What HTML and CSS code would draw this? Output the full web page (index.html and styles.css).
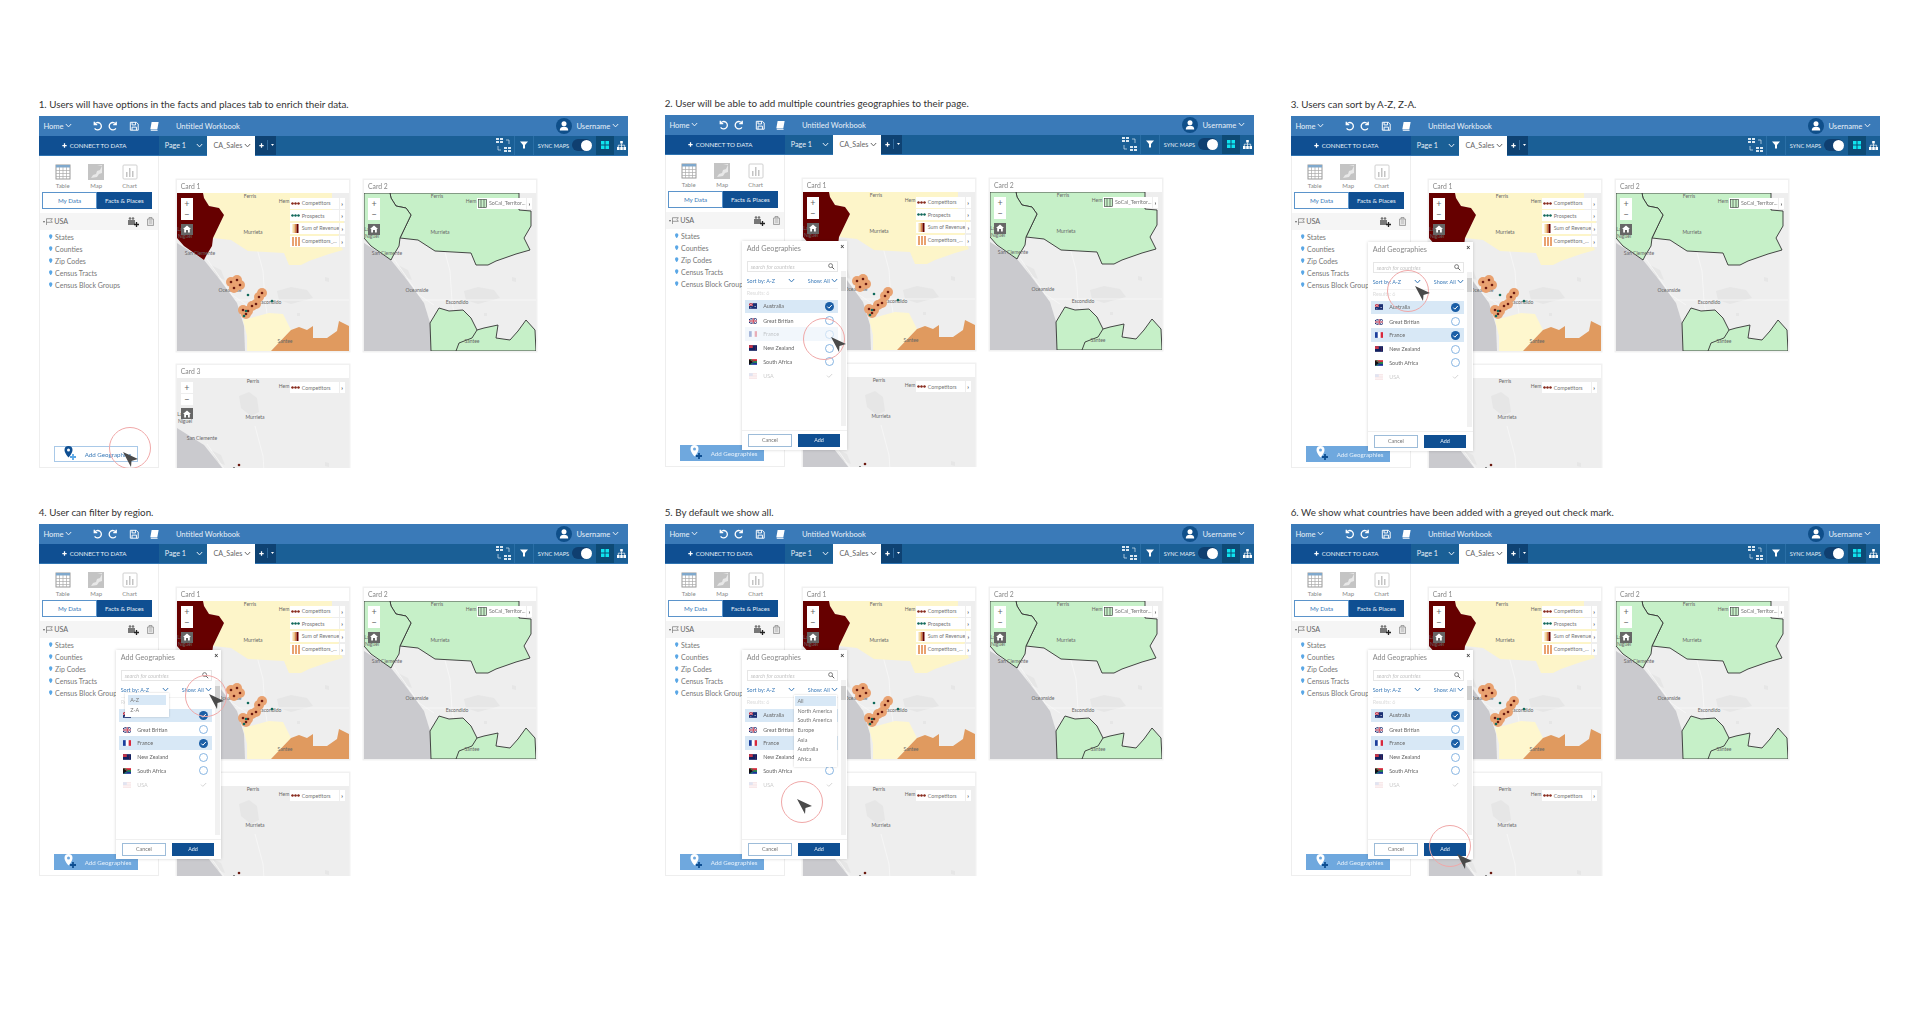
FILE: index.html
```html
<!DOCTYPE html>
<html>

<head>
    <meta charset="UTF-8">
    <title>Add Geographies flow</title>

    <link rel="stylesheet" href="styles.css">

</head>

<body>

    <div id="board"></div>

    <script src="script.js"></script>

</body>

</html>
```

FILE: styles.css
```css
* {
    box-sizing: border-box;
}

body {
    margin: 0;
    background: #fff;
    font-family: Lato, "Open Sans", sans-serif;
    color: #666;
}

svg {
    display: block;
    flex: none;
}

#board {
    display: grid;
    grid-template-columns: repeat(3, 589.5px);
    grid-auto-rows: 372px;
    column-gap: 36.5px;
    row-gap: 36px;
    padding: 96px 0 0 38.7px;
    height: 1020px;
    overflow: hidden;
}

.caption {
    height: 19.5px;
    font-size: 9.8px;
    line-height: 16px;
    color: #333;
    white-space: nowrap;
}

.panel-2 {
    margin-top: -1px;
}

.app {
    position: relative;
    height: 352.5px;
    overflow: hidden;
    filter: blur(0.4px);
}

/* top bars */
.topbar {
    display: flex;
    align-items: center;
    height: 20.5px;
    background: #3a7ab8;
    color: #e6eff7;
    font-size: 7.6px;
}

.home {
    margin-left: 4.7px;
    width: 20px;
}

.topbar .chev {
    margin-left: 2px;
}

.tb-icon {
    width: 10.5px;
    height: 10.5px;
}

.tb-undo {
    margin-left: 19.5px;
}

.tb-redo {
    margin-left: 6px;
}

.tb-save {
    margin-left: 10.5px;
}

.tb-book {
    margin-left: 9px;
}

.workbook {
    margin-left: 16.5px;
}

.user {
    display: flex;
    align-items: center;
    margin-left: auto;
    margin-right: 9px;
}

.avatar {
    width: 16px;
    height: 16px;
    margin-right: 4px;
}

.toolbar {
    display: flex;
    align-items: stretch;
    height: 19.5px;
    background: #1a5f96;
    color: #e6eff7;
    font-size: 6.6px;
    border-bottom: 1px solid #2f74b2;
}

.connect {
    display: flex;
    align-items: center;
    width: 120px;
    padding-left: 23px;
    gap: 3px;
    background: #0f4f92;
    font-size: 6.2px;
}

.tab {
    display: flex;
    align-items: center;
    font-size: 7.2px;
}

.tab-page {
    width: 48.7px;
    padding-left: 6px;
    gap: 10px;
}

.tab-sheet {
    width: 47.3px;
    padding-left: 6px;
    gap: 1.5px;
    background: #fff;
    color: #666;
    margin-bottom: -1px;
}

.tab-add {
    display: flex;
    align-items: center;
    width: 21.6px;
    padding-left: 4px;
    gap: 3px;
    background: #0e4273;
}

.tab-add .sep {
    width: 1px;
    height: 10px;
    background: #2f6a9e;
}

.tools {
    display: flex;
    align-items: center;
    margin-left: auto;
}

.swap {
    width: 15px;
    height: 14px;
}

.tool-sep {
    width: 1px;
    align-self: stretch;
    background: #2a6fa6;
}

.tools .swap + .tool-sep {
    margin-left: 3px;
}

.funnel {
    width: 8px;
    height: 8px;
    margin: 0 5px 0 5px;
}

.sync {
    margin-left: 4px;
    font-size: 5.6px;
    white-space: nowrap;
}

.toggle {
    position: relative;
    width: 20px;
    height: 12px;
    margin-left: 3px;
    margin-right: 4px;
    border-radius: 6px;
    background: #0f3f70;
}

.toggle::after {
    content: "";
    position: absolute;
    right: 0;
    top: 0.5px;
    width: 11px;
    height: 11px;
    border-radius: 50%;
    background: #fff;
}

.grid-btn {
    display: flex;
    align-items: center;
    justify-content: center;
    align-self: stretch;
    width: 17.6px;
    background: #0d4a75;
}

.grid-btn svg {
    width: 8px;
    height: 8px;
}

.org {
    width: 9px;
    height: 9px;
    margin: 0 2.5px 0 3px;
}

/* main area */
.main {
    display: flex;
    height: 312.5px;
}

.sidebar {
    display: flex;
    flex-direction: column;
    width: 120px;
    border: 1px solid #eee;
    border-top: none;
    background: #fff;
}

.views {
    display: flex;
    padding: 8px 0 0 14.5px;
    gap: 16.5px;
}

.view {
    display: flex;
    flex-direction: column;
    align-items: center;
    width: 17px;
    font-size: 6px;
    color: #888;
    gap: 2px;
}

.view svg {
    width: 16px;
    height: 16px;
}

.segment {
    display: flex;
    height: 17px;
    margin: 3px 6px 0 2.5px;
    font-size: 6.2px;
}

.segment span {
    display: flex;
    align-items: center;
    justify-content: center;
}

.seg-left {
    width: 55px;
    border: 1px solid #5b94cb;
    background: #fff;
    color: #3a7ab8;
}

.seg-right {
    width: 55px;
    background: #0f4f92;
    color: #e6eff7;
}

.group {
    display: flex;
    align-items: center;
    height: 17px;
    margin-top: 4.5px;
    padding-left: 3px;
    background: #f5f5f5;
    font-size: 7.2px;
}

.caret {
    width: 0;
    height: 0;
    border: 1.7px solid transparent;
    border-top: 2.2px solid #666;
    border-bottom: none;
}

.flag-line {
    width: 7px;
    height: 7px;
    margin: 0 1px 0 1.5px;
}

.add-layer {
    width: 11px;
    height: 10px;
    margin-left: auto;
}

.trash {
    width: 7px;
    height: 9px;
    margin: 0 4px 0 8px;
}

.layers {
    margin: 0.5px 0 0;
    padding: 0 0 0 9.5px;
    list-style: none;
    font-size: 7px;
    color: #777;
}

.layers li {
    display: flex;
    align-items: center;
    height: 12px;
    gap: 2.5px;
    white-space: nowrap;
}

.pin {
    width: 3.4px;
    height: 5.5px;
}

.add-geo {
    display: flex;
    align-items: center;
    height: 16px;
    margin: auto 0 5px 14px;
    width: 84px;
    padding-left: 9px;
    gap: 8px;
    border: 1px solid #a9c9e8;
    font-size: 6.2px;
    color: #3a7ab8;
    background: #fff;
    white-space: nowrap;
}

.add-geo svg {
    width: 13px;
    height: 14px;
    margin-top: -3px;
}

.add-geo.filled {
    background: #6fa8de;
    border-color: #6fa8de;
    color: #e6f0fa;
}

/* cards */
.canvas {
    display: grid;
    grid-template-columns: 172px 172px;
    grid-template-rows: 171.3px 172px;
    column-gap: 15.3px;
    row-gap: 13.7px;
    padding: 24.5px 0 0 18px;
    overflow: hidden;
    flex: 1;
}

.card {
    position: relative;
    background: #fff;
    box-shadow: 0 0 0 1.5px #f1f1f1;
}

.card-title {
    height: 13.3px;
    padding-left: 4px;
    font-size: 6.8px;
    line-height: 13.3px;
    color: #888;
}

.map {
    width: 172px;
    height: 158px;
}

.map text {
    font-family: Lato, "Open Sans", sans-serif;
    font-size: 5px;
    fill: #666;
}

.map-ctl {
    position: absolute;
    left: 4.5px;
    top: 17.5px;
    width: 11.5px;
}

.map-ctl span {
    display: flex;
    align-items: center;
    justify-content: center;
    height: 11px;
    margin-bottom: 0.5px;
    background: #fff;
    color: #666;
    font-size: 9px;
    line-height: 1;
}

.map-ctl .map-home {
    margin-top: 3.5px;
    background: #666;
}

.map-home svg {
    width: 8px;
    height: 8px;
}

.legend {
    position: absolute;
    left: 113px;
    top: 17.5px;
    width: 55px;
}

.legend-row {
    display: flex;
    align-items: center;
    height: 11px;
    margin-bottom: 1.7px;
    background: #fff;
    font-size: 5.3px;
    color: #777;
    white-space: nowrap;
}

.legend-row svg {
    width: 9px;
    height: 9px;
    margin: 0 2px 0 1px;
}

.legend-row b {
    margin-left: auto;
    width: 6px;
    border-left: 1px solid #eee;
    text-align: center;
    font-size: 6px;
    line-height: 11px;
    color: #333;
}

/* dialog */
.modal {
    position: absolute;
    left: 77px;
    top: 126.5px;
    display: flex;
    flex-direction: column;
    width: 105.5px;
    height: 209px;
    background: #fff;
    box-shadow: 0 0 3px rgba(0, 0, 0, 0.18);
    font-size: 5.4px;
}

.modal-title {
    height: 15.5px;
    padding: 3px 0 0 5px;
    font-size: 7.2px;
    color: #888;
}

.modal-close {
    position: absolute;
    right: 3px;
    top: 2px;
    font-size: 7px;
    font-weight: 700;
    line-height: 1;
    color: #333;
}

.search {
    display: flex;
    align-items: center;
    justify-content: space-between;
    height: 11px;
    margin: 4.5px 9.5px 0 5px;
    padding: 0 2px 0 3px;
    border: 1px solid #e6e6e6;
    font-style: italic;
    color: #c4c4c4;
}

.search svg {
    width: 6.5px;
    height: 6.5px;
}

.sort-row {
    display: flex;
    align-items: center;
    height: 10px;
    margin: 3.5px 9px 0 5px;
    color: #3a7ab8;
    white-space: nowrap;
}

.sort-by {
    width: 44px;
    display: flex;
    gap: 13px;
    align-items: center;
}

.show-by {
    margin-left: auto;
    display: flex;
    gap: 1.5px;
    align-items: center;
}

.results {
    height: 12px;
    margin: 2px 9px 0 5px;
    border-top: 1.5px solid #f3f3f3;
    color: #dcdcdc;
    line-height: 9px;
}

.geo-list {
    margin: 0 9.5px 0 3px;
    padding: 0;
    list-style: none;
}

.geo-row {
    display: flex;
    align-items: center;
    height: 13.8px;
    padding: 0 4px 0 4px;
    gap: 6px;
    color: #666;
}

.geo-row:first-child {
    height: 13px;
    margin-bottom: 1.2px;
}

.geo-row.on {
    background: #d8e8f6;
}

.geo-row.hover {
    background: #f2f7fc;
}

.geo-row.hover > *,
.geo-row.done > * {
    opacity: 0.35;
}

.flag {
    width: 8.5px;
    height: 6px;
}

.tick {
    width: 9px;
    height: 9px;
    margin-left: auto;
}

.scroll {
    position: absolute;
    left: 99px;
    top: 30px;
    width: 5px;
    height: 155px;
    background: #f1f1f1;
}

.scroll::after {
    content: "";
    position: absolute;
    left: 0;
    top: 6px;
    width: 100%;
    height: 14px;
    background: #cfcfcf;
}

.modal-foot {
    display: flex;
    gap: 5.7px;
    height: 20px;
    margin-top: auto;
    padding: 2.5px 7px 3.5px 6px;
    border-top: 1px solid #f0f0f0;
}

.modal-foot span {
    display: flex;
    align-items: center;
    justify-content: center;
    flex: 1;
}

.btn-cancel {
    border: 1px solid #9dbcd9;
    color: #777;
}

.btn-add {
    background: #0f4f92;
    color: #e6eff7;
}

.menu {
    position: absolute;
    background: #fff;
    box-shadow: 0 0 2px rgba(0, 0, 0, 0.2);
    color: #777;
}

.menu div {
    display: flex;
    align-items: center;
    height: 9.7px;
    padding-left: 2px;
}

.menu .sel {
    background: #d8e8f6;
}

.menu-sort {
    left: 9.5px;
    top: 43px;
    width: 43.5px;
    height: 24px;
    padding: 2px 3px;
}

.menu-show {
    left: 52.7px;
    top: 45px;
    width: 42.7px;
    height: 72px;
    padding: 1px;
}

/* walkthrough marker */
.ring {
    position: absolute;
    width: 42px;
    height: 42px;
    margin: -21px 0 0 -21px;
    border: 1px solid #f0a8a8;
    border-radius: 50%;
}

.pointer {
    position: absolute;
    width: 15px;
    height: 15px;
}

.panel-1 .ring { left: 91px; top: 332px; }
.panel-1 .pointer { left: 84.3px; top: 336px; }
.panel-2 .ring { left: 159.3px; top: 224.5px; }
.panel-2 .pointer { left: 166px; top: 222.8px; }
.panel-3 .ring { left: 117.6px; top: 175.5px; }
.panel-3 .pointer { left: 124.5px; top: 170.2px; }
.panel-4 .ring { left: 167.3px; top: 172.5px; }
.panel-4 .pointer { left: 170.4px; top: 170.5px; }
.panel-5 .ring { left: 137.6px; top: 278.8px; }
.panel-5 .pointer { left: 132.4px; top: 275.5px; }
.panel-6 .ring { left: 159.7px; top: 322px; }
.panel-6 .pointer { left: 166.6px; top: 330.8px; }
```

FILE: script.js
```js
// The six steps share one app frame, so it is built from a template.
const chev = (c) => `<svg class="chev" width="7" height="5" viewBox="0 0 7 5"><path d="M.8 1 3.500 3.900 6.200 1" fill="none" stroke="${c}" stroke-width="1"/></svg>`;
const plus = (c, s) => `<svg width="${s}" height="${s}" viewBox="0 0 8 8"><path d="M4 .5v7M.5 4h7" stroke="${c}" stroke-width="2"/></svg>`;

const icons = {
    undo: '<path d="M2.600 .8v3.400H6M2.800 3.900a4.200 4.200 0 1 1 .2 4.400" fill="none" stroke="#fff" stroke-width="1.500"/>',
    redo: '<path d="M9.400 .8v3.400H6M9.200 3.900a4.200 4.200 0 1 0-.2 4.400" fill="none" stroke="#fff" stroke-width="1.500"/>',
    save: '<path d="M1.500 1.500h7l2 2v7h-9zM3.500 1.500v3h4v-3M3.500 10.500V7h5v3.500" fill="none" stroke="#fff" stroke-width="1.100"/>',
    book: '<path d="M3 1h8L9.500 9.500H1.500zM2 10h7.500l.5 1H2z" fill="#fff"/>'
};

const tbIcon = (name) => `<svg class="tb-icon tb-${name}" viewBox="0 0 12 12">${icons[name]}</svg>`;

const topbar = `<div class="topbar">
    <span class="home">Home</span>${chev('#e6eff7')}
    ${tbIcon('undo')}${tbIcon('redo')}${tbIcon('save')}${tbIcon('book')}
    <span class="workbook">Untitled Workbook</span>
    <div class="user">
        <svg class="avatar" viewBox="0 0 16 16"><circle cx="8" cy="8" r="8" fill="#0f4f8a"/><circle cx="8" cy="5.800" r="2.500" fill="#fff"/><path d="M3.800 12.500c0-3 1.800-3.800 4.200-3.800s4.200.8 4.200 3.800z" fill="#fff"/></svg>
        <span>Username</span>${chev('#e6eff7')}
    </div>
</div>`;

const toolbar = `<div class="toolbar">
    <div class="connect">${plus('#fff', 5)}<span>CONNECT TO DATA</span></div>
    <div class="tab tab-page"><span>Page 1</span>${chev('#e6eff7')}</div>
    <div class="tab tab-sheet"><span>CA_Sales</span>${chev('#666')}</div>
    <div class="tab-add">${plus('#fff', 5)}<span class="sep"></span><svg width="3" height="2" viewBox="0 0 3 2"><path d="M0 0h3L1.500 2z" fill="#fff"/></svg></div>
    <div class="tools">
        <svg class="swap" viewBox="0 0 15 14"><path d="M0 0h3v2H0zM4 0h3v2H4zM0 3h3v2H0zM4 3h3v2H4zM8 9h3v2H8zM12 9h3v2h-3zM8 12h3v2H8zM12 12h3v2h-3z" fill="#dbe8f2"/><path d="M10 2h3v4M5 12H2V8" fill="none" stroke="#dbe8f2" stroke-width=".7"/></svg>
        <span class="tool-sep"></span>
        <svg class="funnel" viewBox="0 0 8 8"><path d="M0 .5h8L5 4v3.500H3V4z" fill="#fff"/></svg>
        <span class="tool-sep"></span>
        <span class="sync">SYNC MAPS</span>
        <span class="toggle"></span>
        <span class="grid-btn"><svg viewBox="0 0 8 8"><path d="M0 0h3.500v3.500H0zM4.500 0H8v3.500H4.500zM0 4.500h3.500V8H0zM4.500 4.500H8V8H4.500z" fill="#0fe3ef"/></svg></span>
        <svg class="org" viewBox="0 0 9 9"><path d="M3.200 0h2.600v2.500H3.200zM0 6h2.600v3H0zM3.200 6h2.600v3H3.200zM6.400 6H9v3H6.400z" fill="#fff"/><path d="M4.500 2.500V6M1.300 6V4.200h6.400V6" fill="none" stroke="#fff" stroke-width=".7"/></svg>
    </div>
</div>`;

const viewIcons = {
    table: '<rect x="1" y="1" width="14" height="14" fill="#fff" stroke="#9a9a9a"/><path d="M1 1h14v2.500H1z" fill="#7fa8cc"/><path d="M1 6.500h14M1 9.500h14M1 12.500h14M4.500 3v12M8 3v12M11.500 3v12" stroke="#aaa" stroke-width=".7"/>',
    map: '<rect width="16" height="16" fill="#c4c4c4"/><path d="M9 1l5 1-2 4-3 1-1 3-3 1-2 3 6-1 2-3 3-1V1z" fill="#e8e8e8"/>',
    chart: '<rect x="1" y="1" width="14" height="14" rx="1" fill="#fff" stroke="#d0d0d0"/><path d="M4 13V8h1.500v5zM7 13V4h1.500v9zM10 13V7h1.500v6z" fill="#c4c4c4"/>'
};

const view = (name, label) => `<div class="view"><svg viewBox="0 0 16 16">${viewIcons[name]}</svg><span>${label}</span></div>`;

const layers = ['States', 'Counties', 'Zip Codes', 'Census Tracts', 'Census Block Groups'].map((name) =>
    `<li><svg class="pin" viewBox="0 0 4 6"><path d="M2 0a2 2 0 0 1 2 2c0 1.500-2 4-2 4S0 3.500 0 2a2 2 0 0 1 2-2z" fill="#5aa7e6"/></svg><span>${name}</span></li>`).join('');

function sidebar(filled) {
    return `<div class="sidebar">
        <div class="views">${view('table', 'Table')}${view('map', 'Map')}${view('chart', 'Chart')}</div>
        <div class="segment"><span class="seg-left">My Data</span><span class="seg-right">Facts &amp; Places</span></div>
        <div class="group">
            <span class="caret"></span>
            <svg class="flag-line" viewBox="0 0 7 7"><path d="M.5 7V.7h5.800L5 2.500l1.300 1.800H.5" fill="none" stroke="#777" stroke-width=".7"/></svg>
            <span>USA</span>
            <svg class="add-layer" viewBox="0 0 11 10"><path d="M0 3h7v5H0z" fill="#777"/><circle cx="2" cy="1.500" r="1.300" fill="#777"/><circle cx="5" cy="1.500" r="1.300" fill="#777"/><path d="M8.500 5v5M6 7.500h5" stroke="#222" stroke-width="1.300"/></svg>
            <svg class="trash" viewBox="0 0 7 9"><path d="M.5 2h6v6.500h-6zM2 2V.5h3V2" fill="#e4e4e4" stroke="#888" stroke-width=".7"/><path d="M2 4h3M2 6h3" stroke="#888" stroke-width=".5"/></svg>
        </div>
        <ul class="layers">${layers}</ul>
        <div class="add-geo${filled ? ' filled' : ''}">
            <svg viewBox="0 0 13 14"><path d="M4.500 0A4 4 0 0 1 8.500 4c0 3-4 7.500-4 7.500S.5 7 .5 4a4 4 0 0 1 4-4z" fill="${filled ? '#fff' : '#0f4f92'}"/><circle cx="4.500" cy="4" r="1.500" fill="${filled ? '#6fa8de' : '#fff'}"/><path d="M9 8v6M6 11h6" stroke="${filled ? '#0f4f92' : '#5aa7e6'}" stroke-width="1.800"/></svg>
            <span>Add Geographies</span>
        </div>
    </div>`;
}

// Map art, in card pixels
const OCEAN = '0,50 27,67 43,87 60,110 67,133 68,158 0,158';
const ROADS = 'M0 107H172M78 48l8 30 2 30 8 50M30 66l25 36 15 10';
const BLOBS = '<path d="M62 18l10-4 8 6 2 14-8 4-10-8zM34 72l10 5 4 10-8-3zM100 98l14-4 16 3 6 8-22 6-12-4zM148 84l4 1 0 4-4-1zM120 120l3 0 0 3-3 0z" fill="#e6e6e6"/>';

function labels(names) {
    return names.map(([t, x, y]) => `<text x="${x}" y="${y}" text-anchor="middle">${t}</text>`).join('');
}

const MAIN_LABELS = [['Ferris', 73, 5], ['Hem', 107, 10], ['Murrieta', 76, 41], ['San Clemente', 23, 62], ['Oceanside', 53, 99], ['Escondido', 93, 111], ['Santee', 108, 150], ['Laguna', 8, 38], ['Niguel', 8, 45]];
const LEFT_COUNTY = '0,0 26,0 27,5 32,13 42,15 47,22 36,45 35,53 29,63 27,67 7,53 0,45';
const RIGHT_COUNTY = '26,0 155,0 155,17 167,18 167,33 160,45 166,57 152,61 132,68 124,72 112,72 107,60 71,58 54,47 36,45 47,22 42,15 32,13 27,5';

const markers = [[54, 89], [60, 87], [63, 92], [57, 95], [85, 100], [82, 104], [79, 111], [75, 113], [66, 117], [69, 121], [71, 118]];

function mapOne() {
    const halos = markers.map(([x, y]) => `<circle cx="${x}" cy="${y}" r="5" fill="#e9a271"/>`).join('');
    const dots = markers.map(([x, y]) => `<circle cx="${x}" cy="${y}" r="1.300" fill="#6b1a10"/>`).join('');
    const teal = [[71, 102], [95, 108], [69, 118], [67, 123]].map(([x, y]) => `<circle cx="${x}" cy="${y}" r="1.300" fill="#0f6a5c"/>`).join('');
    return `<svg class="map" viewBox="0 0 172 158">
        <rect width="172" height="158" fill="#eee"/>${BLOBS}
        <path d="${ROADS}" fill="none" stroke="#f8f8f8" stroke-width=".8"/>
        <polygon points="${OCEAN}" fill="#cacace"/>
        <polygon points="${RIGHT_COUNTY}" fill="#fdf5c9"/>
        <polygon points="66,127 92,120 106,121 114,137 94,158 70,158 70,143" fill="#fef7ce"/>
        <polygon points="94,158 114,137 122,134 130,137 136,133 136,145 150,145 160,138 162,128 172,133 172,158" fill="#e09a5f"/>
        <polygon points="${LEFT_COUNTY}" fill="#660000"/>
        ${labels(MAIN_LABELS)}${halos}${dots}${teal}
    </svg>`;
}

function mapTwo() {
    return `<svg class="map" viewBox="0 0 172 158">
        <rect width="172" height="158" fill="#eee"/>${BLOBS}
        <path d="${ROADS}" fill="none" stroke="#f8f8f8" stroke-width=".8"/>
        <polygon points="${OCEAN}" fill="#cacace"/>
        <polygon points="${RIGHT_COUNTY}" fill="#c6f0c8" stroke="#333" stroke-width=".9"/>
        <polygon points="${LEFT_COUNTY}" fill="#c6f0c8" stroke="#333" stroke-width=".9"/>
        <polygon points="67,158 66,130 75,115 85,118 99,117 107,125 113,137 120,135 134,132 132,145 146,147 154,138 162,127 171,137 172,158" fill="#c6f0c8" stroke="#333" stroke-width=".9"/>
        <path d="M113 137l-5 8-13 5-3 8" fill="none" stroke="#333" stroke-width=".9"/>
        ${labels(MAIN_LABELS)}
    </svg>`;
}

function mapThree() {
    return `<svg class="map" viewBox="0 0 172 158">
        <rect width="172" height="158" fill="#eee"/>${BLOBS}
        <path d="${ROADS}" fill="none" stroke="#f8f8f8" stroke-width=".8"/>
        <polygon points="${OCEAN}" fill="#cacace"/>
        ${labels([['Perris', 76, 5], ['Hem', 107, 10], ['Murrieta', 78, 41], ['San Clemente', 25, 62], ['Laguna', 8, 38], ['Niguel', 8, 45]])}
        <circle cx="62" cy="87" r="1.300" fill="#6b1a10"/><circle cx="57" cy="90" r="1" fill="#666"/>
    </svg>`;
}

const legendIcons = {
    red: '<path d="M0 4.500h9" stroke="#666" stroke-width=".5"/><circle cx="1.500" cy="4.500" r="1.200" fill="#8c2a1c"/><circle cx="4.500" cy="4.500" r="1.200" fill="#8c2a1c"/><circle cx="7.500" cy="4.500" r="1.200" fill="#8c2a1c"/>',
    teal: '<path d="M0 4.500h9" stroke="#666" stroke-width=".5"/><circle cx="1.500" cy="4.500" r="1.200" fill="#0f6a5c"/><circle cx="4.500" cy="4.500" r="1.200" fill="#0f6a5c"/><circle cx="7.500" cy="4.500" r="1.200" fill="#0f6a5c"/>',
    ramp: '<path d="M1.500 0h2v9h-2z" fill="#f3d9a0"/><path d="M3.500 0h2v9h-2z" fill="#d98a4c"/><path d="M5.500 0h2v9h-2z" fill="#660000"/>',
    bars: '<path d="M1 0h2v9H1zM4 0h2v9H4zM7 0h2v9H7z" fill="#e9a271"/>',
    green: '<rect x=".5" y=".5" width="8" height="8" fill="#c6f0c8" stroke="#333" stroke-width=".6"/><path d="M3 .5v8M6 .5v8" stroke="#333" stroke-width=".6"/>'
};

function legend(rows) {
    return `<div class="legend">${rows.map(([icon, text]) =>
        `<div class="legend-row"><svg viewBox="0 0 9 9">${legendIcons[icon]}</svg><span>${text}</span><b>&rsaquo;</b></div>`).join('')}</div>`;
}

const mapCtl = `<div class="map-ctl"><span>+</span><span>&minus;</span><span class="map-home"><svg viewBox="0 0 8 8"><path d="M4 .5L8 4H6.800v3.500H5V5H3v2.500H1.200V4H0z" fill="#fff"/></svg></span></div>`;

function card(title, map, rows) {
    return `<div class="card"><div class="card-title">${title}</div>${map}${mapCtl}${legend(rows)}</div>`;
}

const canvas = `<div class="canvas">
    ${card('Card 1', mapOne(), [['red', 'Competitors'], ['teal', 'Prospects'], ['ramp', 'Sum of Revenue'], ['bars', 'Competitors_...']])}
    ${card('Card 2', mapTwo(), [['green', 'SoCal_Territor...']])}
    ${card('Card 3', mapThree(), [['red', 'Competitors']])}
</div>`;

// Flags, 9 by 6
const flags = {
    Australia: '<rect width="9" height="6" fill="#1b2f73"/><path d="M0 0h4v3H0z" fill="#c8354a"/><path d="M0 0l4 3M4 0L0 3" stroke="#fff" stroke-width=".5"/><circle cx="6.500" cy="3.500" r=".6" fill="#fff"/><circle cx="2" cy="4.800" r=".5" fill="#fff"/>',
    'Great Britian': '<rect width="9" height="6" rx="1" fill="#1b2f73"/><path d="M0 0l9 6M9 0L0 6" stroke="#fff" stroke-width="1"/><path d="M4.500 0v6M0 3h9" stroke="#fff" stroke-width="1.800"/><path d="M4.500 0v6M0 3h9" stroke="#c8354a" stroke-width="1"/>',
    France: '<rect width="3" height="6" fill="#1b3f9c"/><rect x="3" width="3" height="6" fill="#fff"/><rect x="6" width="3" height="6" fill="#d8283c"/>',
    'New Zealand': '<rect width="9" height="6" fill="#12205f"/><path d="M0 0h4v3H0z" fill="#c8354a"/><circle cx="6.500" cy="2" r=".5" fill="#d8283c"/><circle cx="7" cy="4" r=".5" fill="#d8283c"/>',
    'South Africa': '<rect width="9" height="3" fill="#d8283c"/><rect y="3" width="9" height="3" fill="#1b2f9c"/><path d="M0 0l4 3-4 3z" fill="#111"/><path d="M1 0l4 2.400h4v1.200H5L1 6" fill="none" stroke="#1f8a4c" stroke-width="1"/>',
    USA: '<rect width="9" height="6" fill="#e8b4b8"/><path d="M0 1.500h9M0 3h9M0 4.500h9" stroke="#fff" stroke-width=".6"/><rect width="4" height="3" fill="#aab4d8"/>'
};

const ticks = {
    on: '<circle cx="4.500" cy="4.500" r="4.500" fill="#1a5ea6"/><path d="M2.300 4.600l1.600 1.600L6.800 3" fill="none" stroke="#fff" stroke-width="1"/>',
    off: '<circle cx="4.500" cy="4.500" r="4" fill="#fff" stroke="#6ba3dc" stroke-width=".8"/>',
    done: '<path d="M2 4.600l1.800 1.800L7.200 3" fill="none" stroke="#888" stroke-width="1"/>'
};

function geoRow(name, state) {
    let rowClass = '';
    let tick = 'off';
    if (state === 'on') {
        rowClass = ' on';
        tick = 'on';
    } else if (state === 'hover') {
        rowClass = ' hover';
    } else if (state === 'done') {
        rowClass = ' done';
        tick = 'done';
    }
    return `<li class="geo-row${rowClass}"><svg class="flag" viewBox="0 0 9 6">${flags[name]}</svg><span>${name}</span><svg class="tick" viewBox="0 0 9 9">${ticks[tick]}</svg></li>`;
}

function menu(kind, items) {
    return `<div class="menu menu-${kind}">${items.map((t, i) => `<div class="${i === 0 ? 'sel' : ''}">${t}</div>`).join('')}</div>`;
}

function modal(france, extra) {
    const rows = [['Australia', 'on'], ['Great Britian', ''], ['France', france], ['New Zealand', ''], ['South Africa', ''], ['USA', 'done']];
    return `<div class="modal">
        <div class="modal-title">Add Geographies</div>
        <span class="modal-close">&times;</span>
        <div class="search"><span>search for countries</span><svg viewBox="0 0 7 7"><circle cx="2.800" cy="2.800" r="2.100" fill="none" stroke="#555" stroke-width=".8"/><path d="M4.400 4.400L6.700 6.700" stroke="#555" stroke-width="1"/></svg></div>
        <div class="sort-row">
            <div class="sort-by"><span>Sort by: A-Z</span>${chev('#3a7ab8')}</div>
            <div class="show-by"><span>Show: All</span>${chev('#3a7ab8')}</div>
        </div>
        <div class="results">Results: 6</div>
        <ul class="geo-list">${rows.map(([n, s]) => geoRow(n, s)).join('')}</ul>
        <div class="scroll"></div>
        <div class="modal-foot"><span class="btn-cancel">Cancel</span><span class="btn-add">Add</span></div>
        ${extra}
    </div>`;
}

const marker = `<span class="ring"></span><svg class="pointer" viewBox="0 0 15 15"><path d="M0 0L15 7 8.500 9 8 15z" fill="#4a4a4a"/></svg>`;

const steps = [
    { text: '1. Users will have options in the facts and places tab to enrich their data.', dialog: '' },
    { text: '2. User will be able to add multiple countries geographies to their page.', dialog: modal('hover', '') },
    { text: '3. Users can sort by A-Z, Z-A.', dialog: modal('on', '') },
    { text: '4. User can filter by region.', dialog: modal('on', menu('sort', ['A-Z', 'Z-A'])) },
    { text: '5. By default we show all.', dialog: modal('on', menu('show', ['All', 'North America', 'South America', 'Europe', 'Asia', 'Australia', 'Africa'])) },
    { text: '6. We show what countries have been added with a greyed out check mark.', dialog: modal('on', '') }
];

document.getElementById('board').innerHTML = steps.map((step, i) => `<section class="panel panel-${i + 1}">
    <div class="caption">${step.text}</div>
    <div class="app">
        ${topbar}${toolbar}
        <div class="main">${sidebar(i > 0)}${canvas}</div>
        ${step.dialog}${marker}
    </div>
</section>`).join('');
```
